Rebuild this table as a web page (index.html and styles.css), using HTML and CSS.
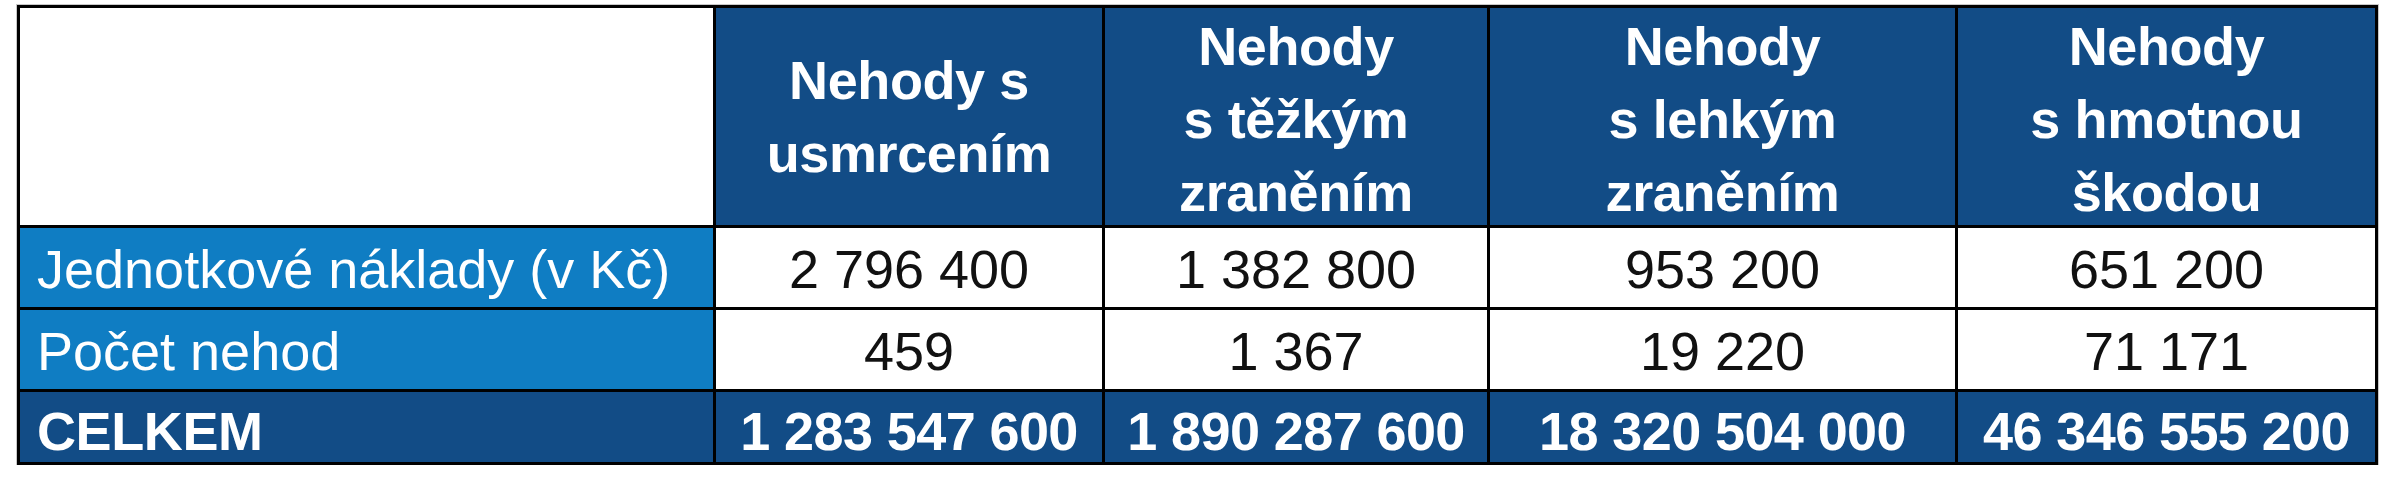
FILE: index.html
```html
<!DOCTYPE html>
<html lang="cs">
<head>
<meta charset="utf-8">
<title>Náklady nehod</title>
<link rel="stylesheet" href="styles.css">
</head>
<body>
<table class="costs">
  <colgroup>
    <col class="c-label">
    <col class="c-1">
    <col class="c-2">
    <col class="c-3">
    <col class="c-4">
  </colgroup>
  <thead>
    <tr class="head-row">
      <th class="corner"></th>
      <th class="head"><div class="head-text">Nehody s<br>usmrcením</div></th>
      <th class="head"><div class="head-text three">Nehody<br>s těžkým<br>zraněním</div></th>
      <th class="head"><div class="head-text three">Nehody<br>s lehkým<br>zraněním</div></th>
      <th class="head"><div class="head-text three">Nehody<br>s hmotnou<br>škodou</div></th>
    </tr>
  </thead>
  <tbody>
    <tr class="data-row">
      <th class="label">Jednotkové náklady (v Kč)</th>
      <td class="num">2 796 400</td>
      <td class="num">1 382 800</td>
      <td class="num">953 200</td>
      <td class="num">651 200</td>
    </tr>
    <tr class="data-row">
      <th class="label">Počet nehod</th>
      <td class="num">459</td>
      <td class="num">1 367</td>
      <td class="num">19 220</td>
      <td class="num">71 171</td>
    </tr>
    <tr class="total-row">
      <th class="label total-label">CELKEM</th>
      <td class="num total">1 283 547 600</td>
      <td class="num total">1 890 287 600</td>
      <td class="num total">18 320 504 000</td>
      <td class="num total">46 346 555 200</td>
    </tr>
  </tbody>
</table>
</body>
</html>
```

FILE: styles.css
```css
html, body {
  margin: 0;
  padding: 0;
  background: #ffffff;
}

body {
  padding: 5px 0 0 17px;
  font-family: "Liberation Sans", Arial, sans-serif;
}

.costs {
  border-collapse: collapse;
  table-layout: fixed;
  width: 2361px;
  border: 3px solid #000;
  outline: 1px solid #c8c8c8;
  font-size: 54px;
}

.c-label { width: 696px; }
.c-1 { width: 389px; }
.c-2 { width: 385px; }
.c-3 { width: 468px; }
.c-4 { width: 420px; }

.costs th,
.costs td {
  border: 3px solid #000;
  white-space: nowrap;
}

.head-row {
  height: 220px;
}

.costs .corner {
  background: #ffffff;
  padding: 0;
}

.costs .head {
  background: #124c86;
  color: #ffffff;
  font-weight: bold;
  text-align: center;
  vertical-align: middle;
  padding: 1px 0 0 0;
  letter-spacing: -0.4px;
}

.head-text {
  line-height: 73px;
}

.head-text.three {
  height: 214px;
}

.data-row {
  height: 82px;
}

.total-row {
  height: 73px;
}

.costs .label {
  background: #0f7dc3;
  color: #ffffff;
  font-weight: normal;
  text-align: left;
  vertical-align: middle;
  line-height: 65px;
  padding: 4px 0 0 17px;
}

.costs .total-label {
  background: #124c86;
  font-weight: bold;
  line-height: 60px;
  padding-top: 8px;
  letter-spacing: -0.4px;
}

.costs .num {
  background: #ffffff;
  color: #111111;
  text-align: center;
  vertical-align: middle;
  line-height: 65px;
  padding: 4px 0 0 0;
}

.costs .num.total {
  background: #124c86;
  color: #ffffff;
  font-weight: bold;
  line-height: 60px;
  padding-top: 8px;
  letter-spacing: -0.6px;
}
```
